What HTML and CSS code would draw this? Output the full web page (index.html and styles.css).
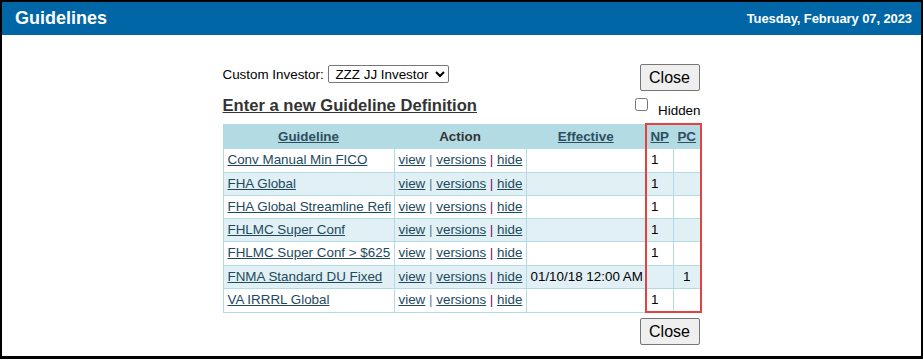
FILE: index.html
```html
<!DOCTYPE html>
<html lang="en">

<head>
    <meta charset="UTF-8">
    <title>Guidelines</title>
    <link rel="stylesheet" href="styles.css">
</head>

<body>
    <div class="frame">
        <header class="title-bar">
            <h1>Guidelines</h1>
            <span class="today">Tuesday, February 07, 2023</span>
        </header>

        <div class="content">
            <div class="top-row">
                <label class="investor">Custom Investor:
                    <select>
                        <option>ZZZ JJ Investor</option>
                    </select>
                </label>
                <button class="close-button">Close</button>
            </div>

            <div class="heading-row">
                <a href="#" class="new-link">Enter a new Guideline Definition</a>
                <label class="hidden-check"><input type="checkbox"> Hidden</label>
            </div>

            <table class="guidelines">
                <thead>
                    <tr>
                        <th class="col-name"><a href="#">Guideline</a></th>
                        <th class="col-action">Action</th>
                        <th class="col-eff"><a href="#">Effective</a></th>
                        <th class="np"><a href="#">NP</a></th>
                        <th class="pc"><a href="#">PC</a></th>
                    </tr>
                </thead>
                <tbody>
                    <tr>
                        <td><a href="#">Conv Manual Min FICO</a></td>
                        <td><a href="#">view</a> <span class="sep">|</span> <a href="#">versions</a> <span class="sep visited">|</span> <a href="#">hide</a></td>
                        <td></td>
                        <td class="np">1</td>
                        <td class="pc"></td>
                    </tr>
                    <tr>
                        <td><a href="#">FHA Global</a></td>
                        <td><a href="#">view</a> <span class="sep">|</span> <a href="#">versions</a> <span class="sep visited">|</span> <a href="#">hide</a></td>
                        <td></td>
                        <td class="np">1</td>
                        <td class="pc"></td>
                    </tr>
                    <tr>
                        <td><a href="#">FHA Global Streamline Refi</a></td>
                        <td><a href="#">view</a> <span class="sep">|</span> <a href="#">versions</a> <span class="sep visited">|</span> <a href="#">hide</a></td>
                        <td></td>
                        <td class="np">1</td>
                        <td class="pc"></td>
                    </tr>
                    <tr>
                        <td><a href="#">FHLMC Super Conf</a></td>
                        <td><a href="#">view</a> <span class="sep">|</span> <a href="#">versions</a> <span class="sep visited">|</span> <a href="#">hide</a></td>
                        <td></td>
                        <td class="np">1</td>
                        <td class="pc"></td>
                    </tr>
                    <tr>
                        <td><a href="#">FHLMC Super Conf &gt; $625</a></td>
                        <td><a href="#">view</a> <span class="sep">|</span> <a href="#">versions</a> <span class="sep visited">|</span> <a href="#">hide</a></td>
                        <td></td>
                        <td class="np">1</td>
                        <td class="pc"></td>
                    </tr>
                    <tr>
                        <td><a href="#">FNMA Standard DU Fixed</a></td>
                        <td><a href="#">view</a> <span class="sep">|</span> <a href="#">versions</a> <span class="sep visited">|</span> <a href="#">hide</a></td>
                        <td>01/10/18 12:00 AM</td>
                        <td class="np"></td>
                        <td class="pc center">1</td>
                    </tr>
                    <tr class="last">
                        <td><a href="#">VA IRRRL Global</a></td>
                        <td><a href="#">view</a> <span class="sep">|</span> <a href="#">versions</a> <span class="sep visited">|</span> <a href="#">hide</a></td>
                        <td></td>
                        <td class="np">1</td>
                        <td class="pc"></td>
                    </tr>
                </tbody>
            </table>

            <div class="bottom-row">
                <button class="close-button">Close</button>
            </div>
        </div>
    </div>
</body>

</html>
```

FILE: styles.css
```css
body {
    margin: 0;
    font-family: 'Liberation Sans', Arial, sans-serif;
    font-size: 13.4px;
    color: #000;
    background: #fff;
}

.frame {
    box-sizing: border-box;
    width: 923px;
    height: 359px;
    border: 2px solid #000;
    border-bottom-width: 3px;
}

.title-bar {
    height: 33px;
    background-color: #0066a6;
    color: #fff;
    display: flex;
    justify-content: space-between;
    align-items: center;
    padding: 0 9px 0 13px;
}

.title-bar h1 {
    margin: 0;
    font-size: 18px;
    font-weight: bold;
}

.today {
    font-size: 13px;
    font-weight: bold;
    letter-spacing: -0.1px;
}

.content {
    width: 478px;
    margin: 0 auto;
    padding-top: 29px;
}

.top-row {
    display: flex;
    justify-content: space-between;
    align-items: flex-start;
}

.investor {
    padding-top: 1px;
}

.investor select {
    width: 121px;
    font-family: 'Liberation Sans', Arial, sans-serif;
    font-size: 13.4px;
    height: 18px;
    margin-left: 1px;
    padding: 0 0 0 2px;
    border: 1px solid #767676;
    border-radius: 2px;
    background: #fff;
    color: #000;
}

.close-button {
    width: 60px;
    height: 27px;
    font-family: 'Liberation Sans', Arial, sans-serif;
    font-size: 16px;
    color: #000;
    background-color: #efefef;
    border: 1px solid #767676;
    border-radius: 2px;
    padding: 0;
    margin-right: 1px;
}

.heading-row {
    display: flex;
    justify-content: space-between;
    align-items: flex-end;
    margin-top: 5px;
    padding-bottom: 7px;
}

.new-link {
    font-size: 16.6px;
    font-weight: bold;
    color: #333;
}

.hidden-check {
    display: flex;
    align-items: flex-end;
    margin-bottom: -2px;
}

.hidden-check input {
    width: 13px;
    height: 13px;
    margin: 0 10px 7px 0;
}

.guidelines {
    width: 478px;
    table-layout: fixed;
    border-collapse: collapse;
    border: 1px solid #b3dbe4;
}

.guidelines th,
.guidelines td {
    border: 1px solid #b3dbe4;
    padding: 3px 4px;
    line-height: 16.3px;
    text-align: left;
    white-space: nowrap;
    overflow: hidden;
}

.guidelines th {
    box-sizing: border-box;
    background-color: #b3dbe4;
    color: #333;
    font-weight: bold;
    text-align: center;
    padding: 4px 3px 3px;
}

.guidelines th a {
    color: #2e4f5f;
}

.guidelines td a {
    color: #1d4a5c;
}

.guidelines tbody tr:nth-child(even) td {
    background-color: #e1f0f5;
}

.col-name {
    width: 171px;
}

.col-action {
    width: 132px;
}

.col-eff {
    width: 120px;
}

.sep {
    color: #5d7a95;
}

.sep.visited {
    color: #800080;
}

.guidelines .np {
    border-left: 2px solid #e8403f;
}

.guidelines th.np {
    width: 27px;
}

.guidelines .pc {
    border-right: 2px solid #e8403f;
}

.guidelines th.pc {
    width: 28px;
}

.guidelines th.np,
.guidelines th.pc {
    border-top: 2px solid #e8403f;
}

.guidelines tr.last .np,
.guidelines tr.last .pc {
    border-bottom: 2px solid #e8403f;
}

.guidelines td.center {
    text-align: center;
}

.bottom-row {
    display: flex;
    justify-content: flex-end;
    margin-top: 5px;
}
```
